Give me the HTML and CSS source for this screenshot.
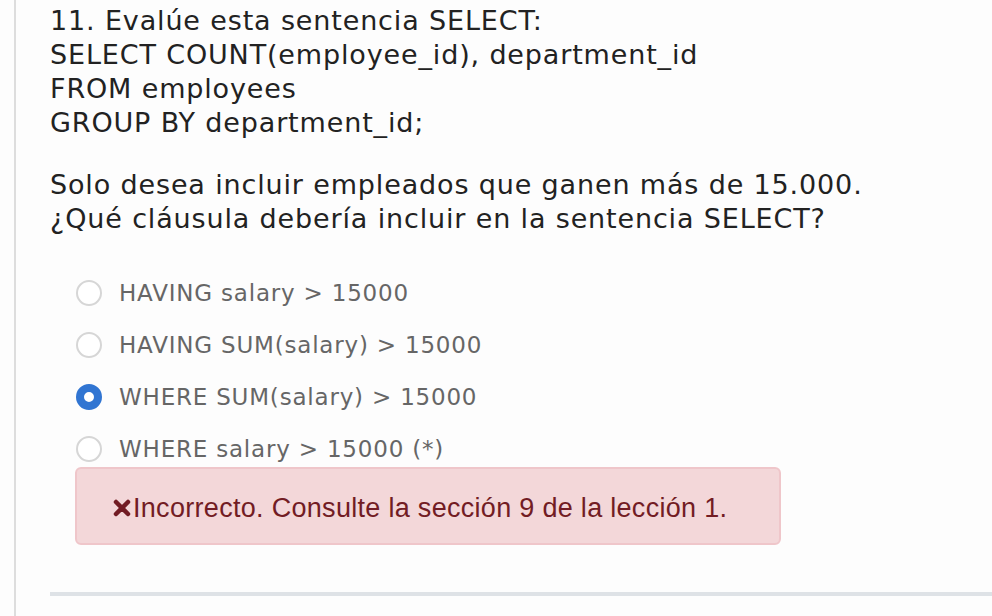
FILE: index.html
```html
<!DOCTYPE html>
<html lang="es">
<head>
<meta charset="utf-8">
<title>Pregunta 11</title>
<link rel="stylesheet" href="styles.css">
</head>
<body>
<div class="page">
  <div class="question">
    <div class="stem">
      <p class="code">11. Evalúe esta sentencia SELECT:<br>SELECT COUNT(employee_id), department_id<br>FROM employees<br>GROUP BY department_id;</p>
      <p class="ask">Solo desea incluir empleados que ganen más de 15.000.<br>¿Qué cláusula debería incluir en la sentencia SELECT?</p>
    </div>
    <ul class="options">
      <li class="option"><span class="radio"></span><span class="label">HAVING salary &gt; 15000</span></li>
      <li class="option"><span class="radio"></span><span class="label">HAVING SUM(salary) &gt; 15000</span></li>
      <li class="option"><span class="radio checked"></span><span class="label">WHERE SUM(salary) &gt; 15000</span></li>
      <li class="option"><span class="radio"></span><span class="label">WHERE salary &gt; 15000 (*)</span></li>
    </ul>
    <div class="alert">
      <svg class="x-icon" viewBox="0 0 18 18" width="18" height="18" aria-hidden="true"><path d="M3 3 L15 15 M15 3 L3 15" stroke="#721c24" stroke-width="4.5" stroke-linecap="round"/></svg><span>Incorrecto. Consulte la sección 9 de la lección 1.</span>
    </div>
  </div>
  <div class="divider"></div>
</div>
</body>
</html>
```
FILE: styles.css
```css
html, body {
  margin: 0;
  padding: 0;
  background: #fdfdfd;
}
.page {
  margin-left: 14px;
  border-left: 2px solid #dddddd;
  min-height: 616px;
  padding-left: 34px;
  padding-top: 4px;
  box-sizing: border-box;
}
.stem {
  font-family: "DejaVu Sans", Verdana, sans-serif;
  font-size: 27px;
  line-height: 34px;
  letter-spacing: 0.85px;
  color: #222222;
}
.stem p {
  margin: 0;
}
.stem .ask {
  margin-top: 28px;
}
.options {
  list-style: none;
  margin: 31px 0 0 0;
  padding: 0 0 0 26px;
  font-family: "DejaVu Sans", Verdana, sans-serif;
  font-size: 23px;
  letter-spacing: 0.8px;
  color: #666666;
}
.option {
  display: flex;
  align-items: center;
  height: 52px;
}
.radio {
  width: 22px;
  height: 22px;
  border: 2px solid #d6d6d6;
  border-radius: 50%;
  box-sizing: content-box;
  margin-right: 17px;
  flex: none;
  background: #fff;
}
.radio.checked {
  border: 8px solid #3175d2;
  width: 10px;
  height: 10px;
}
.alert {
  margin: -8px 0 0 25px;
  width: 706px;
  height: 78px;
  box-sizing: border-box;
  background: #f3d7d9;
  border: 2px solid #efc6ca;
  border-radius: 6px;
  display: flex;
  align-items: center;
  padding-left: 36px;
  padding-top: 4px;
  font-family: "Liberation Sans", Arial, sans-serif;
  font-size: 27px;
  letter-spacing: 0.3px;
  color: #721c24;
}
.x-icon {
  margin-right: 2px;
  flex: none;
}
.divider {
  margin-top: 47px;
  height: 4px;
  background: #dee2e6;
}
```
